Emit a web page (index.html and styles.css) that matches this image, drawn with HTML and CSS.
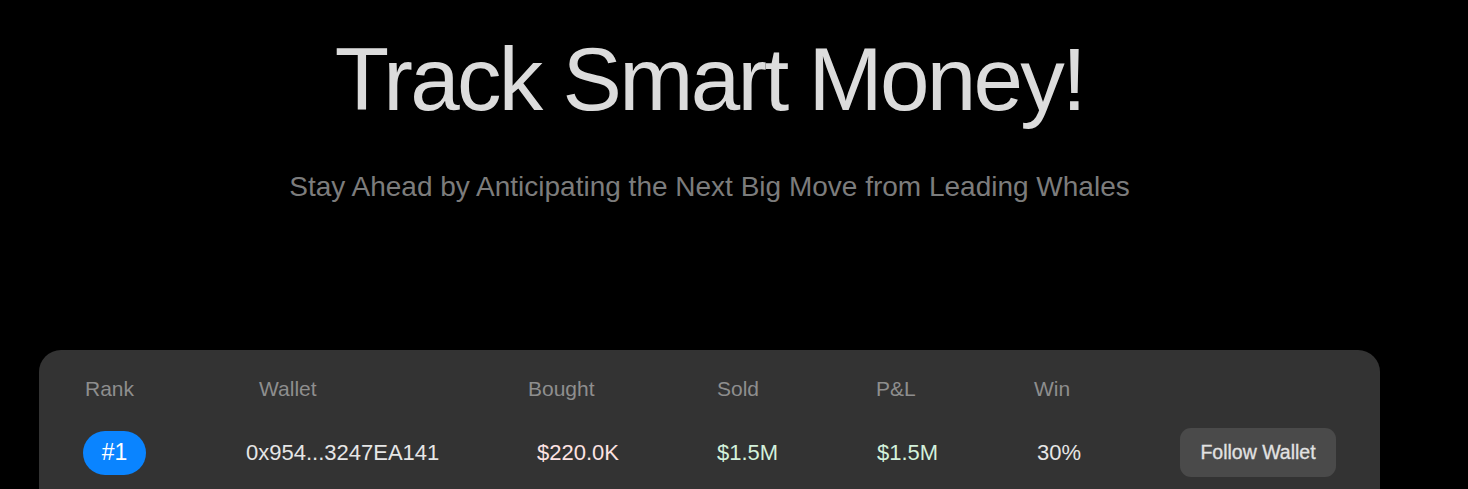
FILE: index.html
```html
<!DOCTYPE html>
<html lang="en">
<head>
<meta charset="utf-8">
<title>Track Smart Money</title>
<link rel="stylesheet" href="styles.css">
</head>
<body>
<main class="page">
  <header class="hero">
    <h1 class="title">Track Smart Money!</h1>
    <p class="subtitle">Stay Ahead by Anticipating the Next Big Move from Leading Whales</p>
  </header>
  <section class="card">
    <div class="grid head">
      <div class="h h-rank">Rank</div>
      <div class="h h-wallet">Wallet</div>
      <div class="h">Bought</div>
      <div class="h">Sold</div>
      <div class="h">P&amp;L</div>
      <div class="h">Win</div>
      <div></div>
    </div>
    <div class="grid row">
      <div><span class="pill">#1</span></div>
      <div class="v">0x954...3247EA141</div>
      <div class="v bought">$220.0K</div>
      <div class="v green">$1.5M</div>
      <div class="v green pl">$1.5M</div>
      <div class="v win">30%</div>
      <div><button class="follow">Follow Wallet</button></div>
    </div>
  </section>
</main>
</body>
</html>
```
FILE: styles.css
```css
html, body {
  margin: 0;
  background: #000;
  font-family: "Liberation Sans", Arial, sans-serif;
  overflow: hidden;
}

.page {
  padding: 0 88px 0 39px;
}

.hero {
  display: flex;
  flex-direction: column;
  align-items: center;
  padding-top: 35px;
}

.title {
  margin: 0;
  font-size: 89px;
  line-height: 1;
  font-weight: 400;
  color: #dcdcdc;
  letter-spacing: -2.7px;
}

.subtitle {
  margin: 49px 0 0;
  font-size: 28px;
  line-height: 1;
  color: #7c7c7c;
}

.card {
  margin-top: 149px;
  background: #333333;
  border-radius: 22px;
  padding: 28px 0 60px 44px;
}

.grid {
  display: grid;
  grid-template-columns: 163px 282px 189px 159px 158px 146px auto;
  align-items: center;
}

.h {
  font-size: 21px;
  line-height: 1;
  color: #8e8e8e;
}

.h-rank { padding-left: 2px; }
.h-wallet { padding-left: 13px; }

.row {
  margin-top: 29px;
}

.v {
  font-size: 22px;
  line-height: 1;
  color: #e6e6e6;
}

.bought { color: #fde2e2; padding-left: 9px; }
.green { color: #d4f2dc; }
.pl { padding-left: 1px; }
.win { padding-left: 3px; }

.pill {
  display: inline-flex;
  align-items: center;
  justify-content: center;
  width: 63px;
  height: 44px;
  border-radius: 22px;
  background: #0a84ff;
  color: #fff;
  font-size: 23px;
}

.follow {
  display: flex;
  align-items: center;
  justify-content: center;
  width: 156px;
  height: 49px;
  border: 0;
  border-radius: 11px;
  background: #4a4a4a;
  color: #e2e2e2;
  font-family: "Liberation Sans", Arial, sans-serif;
  font-size: 19.5px;
  padding: 0;
  -webkit-text-stroke: 0.3px #e2e2e2;
}
```
